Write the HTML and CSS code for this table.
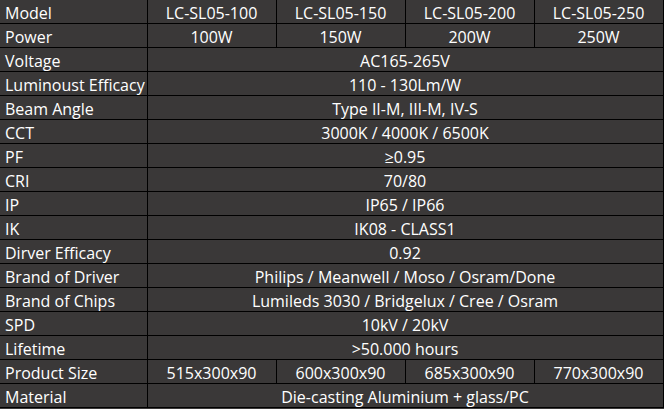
FILE: index.html
```html
<!DOCTYPE html>
<html>
<head>
<meta charset="utf-8">
<link rel="stylesheet" href="styles.css">
</head>
<body>
<table class="spec">
  <colgroup>
    <col class="c-label"><col class="c-val"><col class="c-val"><col class="c-val"><col class="c-last">
  </colgroup>
  <tr><td class="lbl">Model</td><td>LC-SL05-100</td><td>LC-SL05-150</td><td>LC-SL05-200</td><td>LC-SL05-250</td></tr>
  <tr><td class="lbl">Power</td><td>100W</td><td>150W</td><td>200W</td><td>250W</td></tr>
  <tr><td class="lbl">Voltage</td><td colspan="4">AC165-265V</td></tr>
  <tr><td class="lbl">Luminoust Efficacy</td><td colspan="4">110 - 130Lm/W</td></tr>
  <tr><td class="lbl">Beam Angle</td><td colspan="4">Type II-M, III-M, IV-S</td></tr>
  <tr><td class="lbl">CCT</td><td colspan="4">3000K / 4000K / 6500K</td></tr>
  <tr><td class="lbl">PF</td><td colspan="4">≥0.95</td></tr>
  <tr><td class="lbl">CRI</td><td colspan="4">70/80</td></tr>
  <tr><td class="lbl">IP</td><td colspan="4">IP65 / IP66</td></tr>
  <tr><td class="lbl">IK</td><td colspan="4">IK08 - CLASS1</td></tr>
  <tr><td class="lbl">Dirver Efficacy</td><td colspan="4">0.92</td></tr>
  <tr><td class="lbl">Brand of Driver</td><td colspan="4">Philips / Meanwell / Moso / Osram/Done</td></tr>
  <tr><td class="lbl">Brand of Chips</td><td colspan="4">Lumileds 3030 / Bridgelux / Cree / Osram</td></tr>
  <tr><td class="lbl">SPD</td><td colspan="4">10kV / 20kV</td></tr>
  <tr><td class="lbl">Lifetime</td><td colspan="4">&gt;50.000 hours</td></tr>
  <tr><td class="lbl">Product Size</td><td>515x300x90</td><td>600x300x90</td><td>685x300x90</td><td>770x300x90</td></tr>
  <tr><td class="lbl">Material</td><td colspan="4">Die-casting Aluminium + glass/PC</td></tr>
</table>
</body>
</html>
```

FILE: styles.css
```css
html, body {
  margin: 0;
  padding: 0;
  background: #3a3838;
}
.spec {
  border-collapse: collapse;
  table-layout: fixed;
  width: 663px;
  font-family: "Open Sans", sans-serif;
  font-size: 16px;
  color: #ffffff;
}
.c-label { width: 147px; }
.c-val { width: 129px; }
.c-last { width: 129px; }
.spec td {
  height: 23px;
  padding: 3px 0 0 0;
  box-sizing: border-box;
  border-right: 1px solid #000;
  border-bottom: 1px solid #000;
  text-align: center;
  white-space: nowrap;
  line-height: 20px;
  overflow: hidden;
}
.spec td.lbl {
  text-align: left;
  padding-left: 5px;
}
```
